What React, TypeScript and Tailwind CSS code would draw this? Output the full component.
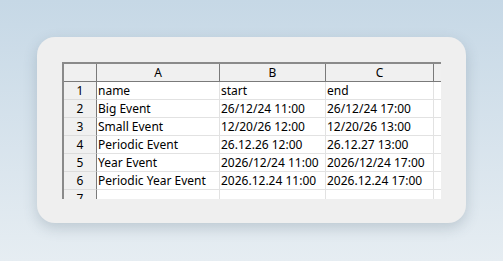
import React from "react";

const rows: [string, string, string][] = [
  ["name", "start", "end"],
  ["Big Event", "26/12/24 11:00", "26/12/24 17:00"],
  ["Small Event", "12/20/26 12:00", "12/20/26 13:00"],
  ["Periodic Event", "26.12.26 12:00", "26.12.27 13:00"],
  ["Year Event", "2026/12/24 11:00", "2026/12/24 17:00"],
  ["Periodic Year Event", "2026.12.24 11:00", "2026.12.24 17:00"],
  ["", "", ""],
];

const cols = "grid-cols-[33px_123px_106px_108px_40px]";

export default function App() {
  return (
    <div className="w-[503px] h-[261px] bg-gradient-to-b from-[#c6d8e6] to-[#e6edf2] pt-[37px] pl-[37px] font-['Noto_Sans',sans-serif]">
      <div className="w-[429px] h-[186px] rounded-[18px] bg-[#efefef] shadow-[0_5px_14px_rgba(60,80,100,0.22)] p-[25px] pr-[24px]">
        <div className="w-[379px] h-[137px] overflow-hidden border-l-2 border-t-2 border-[#8a8a8a] bg-white text-[12px] leading-[17px] text-black">
          {/* column header strip */}
          <div className={`grid ${cols} h-[18px] bg-[#f0f0f0]`}>
            <div className="border-r border-b border-[#7a7a7a]" />
            {["A", "B", "C", ""].map((c, i) => (
              <div key={i} className="border-r border-b border-[#7a7a7a] text-center">
                {c}
              </div>
            ))}
          </div>
          {rows.map((r, i) => (
            <div key={i} className={`grid ${cols} h-[18px]`}>
              <div className="bg-[#f0f0f0] border-r border-[#7a7a7a] border-b border-b-[#dcdcdc] text-center">
                {i + 1}
              </div>
              {r.map((v, j) => (
                <div key={j} className="border-r border-b border-[#e2e2e2] pl-[1px] whitespace-nowrap overflow-hidden">
                  {v}
                </div>
              ))}
              <div className="border-r border-b border-[#e2e2e2]" />
            </div>
          ))}
        </div>
      </div>
    </div>
  );
}
